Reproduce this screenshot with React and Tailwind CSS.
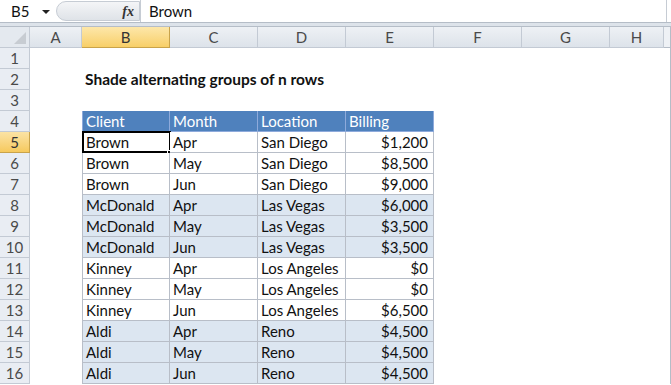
const cols = [
  { id: "A", w: "w-[52px]" },
  { id: "B", w: "w-[88px]" },
  { id: "C", w: "w-[88px]" },
  { id: "D", w: "w-[88px]" },
  { id: "E", w: "w-[88px]" },
  { id: "F", w: "w-[88px]" },
  { id: "G", w: "w-[88px]" },
  { id: "H", w: "w-[54px]" },
]

const data = [
  ["Brown", "Apr", "San Diego", "$1,200"],
  ["Brown", "May", "San Diego", "$8,500"],
  ["Brown", "Jun", "San Diego", "$9,000"],
  ["McDonald", "Apr", "Las Vegas", "$6,000"],
  ["McDonald", "May", "Las Vegas", "$3,500"],
  ["McDonald", "Jun", "Las Vegas", "$3,500"],
  ["Kinney", "Apr", "Los Angeles", "$0"],
  ["Kinney", "May", "Los Angeles", "$0"],
  ["Kinney", "Jun", "Los Angeles", "$6,500"],
  ["Aldi", "Apr", "Reno", "$4,500"],
  ["Aldi", "May", "Reno", "$4,500"],
  ["Aldi", "Jun", "Reno", "$4,500"],
]

const RowHead = ({ n, active }) => (
  <div
    className={`w-[30px] shrink-0 h-full flex items-center justify-center border-r border-b text-[15px] ${
      active
        ? "bg-gradient-to-b from-[#fbe3a4] to-[#f6c95c] border-[#c9a34a] text-[#333]"
        : "bg-[#e9edf3] border-[#c3cad4] text-[#4a4a4a]"
    }`}
  >
    {n}
  </div>
)

const Blank = ({ w }) => <div className={`${w} shrink-0 h-full`} />

const Row = ({ n, children, active }) => (
  <div className="flex h-[21px]">
    <RowHead n={n} active={active} />
    <div className="flex-1 flex h-full">{children}</div>
    <div className="w-[4px] shrink-0 h-full border-r border-[#b5bdc7]" />
  </div>
)

export default function App() {
  return (
    <div className="w-[671px] h-[385px] overflow-hidden bg-white font-['Lato',sans-serif] text-[#111]">
      {/* formula bar */}
      <div className="flex h-[22px] items-center bg-white">
        <div className="w-[56px] h-full flex items-center pl-[11px] text-[15px] relative">
          B5
          <div className="absolute left-[42px] top-[10px] w-0 h-0 border-l-[4px] border-l-transparent border-r-[4px] border-r-transparent border-t-[4px] border-t-[#222]" />
        </div>
        <div className="w-[84px] h-[20px] rounded-l-full bg-gradient-to-b from-[#f4f5f7] to-[#dfe3e8] border border-[#c6ccd4] flex items-center justify-end pr-[5px]">
          <span className="font-['Liberation_Serif',serif] italic font-bold text-[14px] text-[#333]">fx</span>
        </div>
        <div className="flex-1 h-full border-l border-r border-[#c6ccd4] mr-[4px] flex items-center pl-[8px] text-[15px]">Brown</div>
      </div>
      <div className="h-[5px] bg-[#dde3ea] border-t border-[#b5bdc7] border-b border-[#a4adb8]" />

      {/* column headers */}
      <div className="flex h-[21px]">
        <div className="w-[30px] shrink-0 h-full bg-[#e4e9ef] border-r border-b border-[#c3cad4] relative overflow-hidden">
          <div className="absolute right-[3px] bottom-[3px] w-0 h-0 border-l-[12px] border-l-transparent border-b-[12px] border-b-[#c7ccd2]" />
        </div>
        {cols.map((c) => (
          <div
            key={c.id}
            className={`${c.w} shrink-0 h-full flex items-center justify-center border-r border-b text-[15px] ${
              c.id === "B"
                ? "bg-gradient-to-b from-[#fde7a9] to-[#f8cf67] border-[#c9a34a] text-[#333]"
                : "bg-gradient-to-b from-[#eef1f5] to-[#dde3ea] border-[#c3cad4] text-[#4a4a4a]"
            }`}
          >
            {c.id}
          </div>
        ))}
        <div className="flex-1 h-full border-b border-r border-[#b5bdc7] bg-[#eef1f5]" />
      </div>

      <Row n={1} />
      <Row n={2}>
        <Blank w="w-[52px]" />
        <div className="h-full flex items-center pl-[3px] font-bold text-[15.5px] whitespace-nowrap">
          Shade alternating groups of n rows
        </div>
      </Row>
      <Row n={3} />
      <Row n={4}>
        <Blank w="w-[52px]" />
        {["Client", "Month", "Location", "Billing"].map((h, i) => (
          <div
            key={h}
            className={`w-[88px] shrink-0 h-full bg-[#4f81bd] text-white flex items-center pl-[3px] text-[15px] border-r border-b border-[#8eaadb] ${
              i === 0 ? "border-l" : ""
            }`}
          >
            {h}
          </div>
        ))}
      </Row>
      {data.map((r, ri) => {
        const shaded = Math.floor(ri / 3) % 2 === 1
        return (
          <Row key={ri} n={ri + 5} active={ri === 0}>
            <Blank w="w-[52px]" />
            {r.map((v, ci) => (
              <div
                key={ci}
                className={`w-[88px] shrink-0 h-full flex items-center text-[15px] border-r border-b border-[#b8bec8] relative ${
                  ci === 0 ? "border-l" : ""
                } ${ci === 3 ? "justify-end pr-[5px]" : "pl-[3px]"} ${shaded ? "bg-[#dce6f1]" : "bg-white"}`}
              >
                {v}
                {ri === 0 && ci === 0 && (
                  <>
                    <div className="absolute -left-px -top-px w-[89px] h-[22px] border-2 border-black" />
                    <div className="absolute -right-[3px] -bottom-[3px] w-[5px] h-[5px] bg-black border border-white" />
                  </>
                )}
              </div>
            ))}
          </Row>
        )
      })}
    </div>
  )
}
